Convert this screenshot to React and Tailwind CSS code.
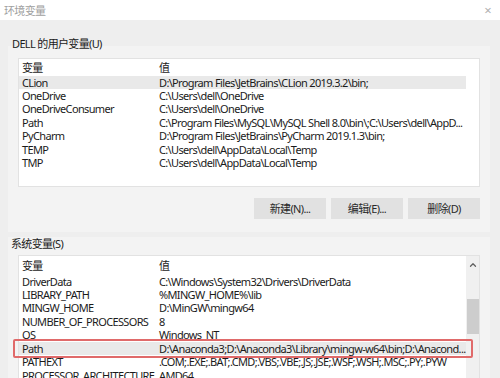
import { ChevronUp, ChevronDown } from 'lucide-react'

const userVars = [
  ['CLion', 'D:\\Program Files\\JetBrains\\CLion 2019.3.2\\bin;'],
  ['OneDrive', 'C:\\Users\\dell\\OneDrive'],
  ['OneDriveConsumer', 'C:\\Users\\dell\\OneDrive'],
  ['Path', 'C:\\Program Files\\MySQL\\MySQL Shell 8.0\\bin\\;C:\\Users\\dell\\AppD...'],
  ['PyCharm', 'D:\\Program Files\\JetBrains\\PyCharm 2019.1.3\\bin;'],
  ['TEMP', 'C:\\Users\\dell\\AppData\\Local\\Temp'],
  ['TMP', 'C:\\Users\\dell\\AppData\\Local\\Temp'],
]

const sysVars = [
  ['DriverData', 'C:\\Windows\\System32\\Drivers\\DriverData'],
  ['LIBRARY_PATH', '%MINGW_HOME%\\lib'],
  ['MINGW_HOME', 'D:\\MinGW\\mingw64'],
  ['NUMBER_OF_PROCESSORS', '8'],
  ['OS', 'Windows_NT'],
  ['Path', 'D:\\Anaconda3;D:\\Anaconda3\\Library\\mingw-w64\\bin;D:\\Anacond...'],
  ['PATHEXT', '.COM;.EXE;.BAT;.CMD;.VBS;.VBE;.JS;.JSE;.WSF;.WSH;.MSC;.PY;.PYW'],
  ['PROCESSOR_ARCHITECTURE', 'AMD64'],
]

function Row({ name, value, selected, boxed }) {
  return (
    <div className={`relative flex h-[13.45px] leading-[13.45px] whitespace-nowrap ${selected ? 'bg-[#e9e9e9]' : ''}`}>
      <span className="w-[140px] shrink-0 pl-[3px]">{name}</span>
      <span className="min-w-0">{value}</span>
      {boxed && (
        <div className="absolute left-[-6px] right-[-7px] top-[-3px] bottom-[-3px] border-2 border-[#e06a6a] rounded-[2px]" />
      )}
    </div>
  )
}

function Header() {
  return (
    <div className="flex h-[14.5px] leading-[14.5px] whitespace-nowrap">
      <span className="w-[140px] shrink-0 pl-[3px]">变量</span>
      <span>值</span>
    </div>
  )
}

export default function App() {
  return (
    <div
      className="w-[500px] h-[378px] overflow-hidden bg-[#eeeeee] text-[11px] tracking-[-0.65px] text-[#1b1b1b] leading-none"
      style={{ fontFamily: '"Noto Sans", "Noto Sans CJK SC", sans-serif' }}
    >
      <div className="h-[20px] bg-white flex items-center justify-between pl-[4px] pr-[9px]">
        <span className="text-[11px] text-[#a0a0a0]">环境变量</span>
        <span className="text-[13px] text-[#b0b0b0]">×</span>
      </div>

      <div className="pt-[18px] pl-[12px] h-[32px]">DELL 的用户变量(U)</div>

      <div className="ml-[8px] mr-[10px] -mt-[6px] bg-[#f3f3f3] px-[10px] pt-[12px] pb-[13px]">
        <div className="h-[129px] overflow-hidden bg-white border border-[#e2e2e2] pt-[2px] pr-[13px]">
          <Header />
          {userVars.map(([n, v], i) => (
            <Row key={n + i} name={n} value={v} selected={i === 0} />
          ))}
        </div>
        <div className="flex justify-end gap-[5px] mt-[11px]">
          {['新建(N)...', '编辑(E)...', '删除(D)'].map((b) => (
            <button key={b} className="w-[72px] h-[21px] bg-[#e1e1e1] text-[11px] text-[#2a2a2a]">
              {b}
            </button>
          ))}
        </div>
      </div>

      <div className="ml-[8px] mr-[10px] mt-[5px] bg-[#f3f3f3] px-[10px] pb-[20px]">
        <div className="-ml-[7px] h-[14px] pt-[1px]">系统变量(S)</div>
        <div className="mt-[4px] relative flex bg-white border border-[#e2e2e2] h-[140px]">
          <div className="flex-1 min-w-0 pt-[3px]">
            <Header />
            <div className="h-[1px]" />
            {sysVars.map(([n, v], i) => (
              <Row key={n + i} name={n} value={v} selected={i === 5} boxed={i === 5} />
            ))}
          </div>
          <div className="w-[13px] shrink-0 bg-[#f0f0f0] flex flex-col items-center">
            <ChevronUp size={10} strokeWidth={3} className="text-[#606060] mt-[4px]" />
            <div className="w-[12px] h-[35px] bg-[#cdcdcd] mt-[29px]" />
            <ChevronDown size={10} strokeWidth={3} className="text-[#a0a0a0] mt-auto mb-[1px]" />
          </div>
        </div>
      </div>
    </div>
  )
}
